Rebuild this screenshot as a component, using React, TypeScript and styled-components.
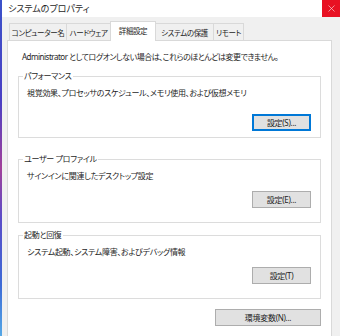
import styled, { createGlobalStyle } from 'styled-components'
import { X } from 'lucide-react'

const GlobalStyle = createGlobalStyle`
  html, body {
    margin: 0;
    padding: 0;
  }
  body {
    width: 340px;
    height: 336px;
    overflow: hidden;
    background: #f0f0f0;
    font-family: "Noto Sans", "Noto Sans CJK JP", sans-serif;
    font-size: 8px;
    letter-spacing: -0.3px;
    font-feature-settings: "palt";
    color: #1e1e1e;
  }
`

const tabs = [
  { label: 'コンピューター名', width: 58 },
  { label: 'ハードウェア', width: 45 },
  { label: '詳細設定', width: 46, active: true },
  { label: 'システムの保護', width: 59 },
  { label: 'リモート', width: 31 },
]

const groups = [
  { title: 'パフォーマンス', text: '視覚効果、プロセッサのスケジュール、メモリ使用、および仮想メモリ', button: '設定(S)...', primary: true, top: 0, gap: 15, bottom: 6 },
  { title: 'ユーザー プロファイル', text: 'サインインに関連したデスクトップ設定', button: '設定(E)...', primary: false, top: 15, gap: 9, bottom: 14 },
  { title: '起動と回復', text: 'システム起動、システム障害、およびデバッグ情報', button: '設定(T)', primary: false, top: 6, gap: 9, bottom: 14 },
]

const App = () => {
  return (
    <>
      <GlobalStyle />
      <Screen>
        <DesktopEdge />
        <Window>
          <TitleBar>
            <Title>システムのプロパティ</Title>
            <CloseButton><X size={11} strokeWidth={1.5} /></CloseButton>
          </TitleBar>
          <Body>
            <TabRow>
              {tabs.map((t) => (
                <Tab key={t.label} $active={t.active} $width={t.width}>{t.label}</Tab>
              ))}
            </TabRow>
            <Panel>
              <Notice>Administrator としてログオンしない場合は、これらのほとんどは変更できません。</Notice>
              {groups.map((g) => (
                <Group key={g.title} $top={g.top} $bottom={g.bottom}>
                  <Legend>{g.title}</Legend>
                  <Description>{g.text}</Description>
                  <ButtonRow $gap={g.gap}>
                    <Button $primary={g.primary}>{g.button}</Button>
                  </ButtonRow>
                </Group>
              ))}
              <FooterRow>
                <Button $wide>環境変数(N)...</Button>
              </FooterRow>
            </Panel>
          </Body>
        </Window>
      </Screen>
    </>
  )
}

const Screen = styled.div`
  display: flex;
  width: 340px;
  height: 336px;
`

const DesktopEdge = styled.div`
  width: 2px;
  background: linear-gradient(to bottom, #3b52c9 0%, #4a3fc4 30%, #a2419a 50%, #5a4cc8 65%, #3d6bd6 85%, #55a8e6 100%);
`

const Window = styled.div`
  flex: 1;
  display: flex;
  flex-direction: column;
  background: #f0f0f0;
`

const TitleBar = styled.div`
  height: 17px;
  display: flex;
  align-items: center;
  justify-content: space-between;
  background: #fff;
`

const Title = styled.div`
  padding-left: 6px;
  font-size: 9px;
  letter-spacing: 0;
`

const CloseButton = styled.div`
  width: 18px;
  height: 17px;
  display: flex;
  align-items: center;
  justify-content: center;
  background: #e81123;
  color: #f4d0d3;
`

const Body = styled.div`
  flex: 1;
  display: flex;
  flex-direction: column;
  padding: 6px 8px 0 5px;
`

const TabRow = styled.div`
  display: flex;
  align-items: flex-end;
  padding-left: 2px;
  height: 17px;
`

const Tab = styled.div<{ $active?: boolean; $width: number }>`
  position: relative;
  box-sizing: border-box;
  width: ${(p) => p.$width}px;
  height: ${(p) => (p.$active ? '20px' : '17px')};
  display: flex;
  align-items: center;
  justify-content: center;
  margin-right: -1px;
  margin-bottom: ${(p) => (p.$active ? '-1px' : '0')};
  padding-bottom: ${(p) => (p.$active ? '2px' : '0')};
  border: 1px solid #d9d9d9;
  border-bottom: none;
  background: ${(p) => (p.$active ? '#fff' : '#f0f0f0')};
  z-index: ${(p) => (p.$active ? 1 : 0)};
  font-size: 7.5px;
  letter-spacing: -0.4px;
  white-space: nowrap;
`

const Panel = styled.div`
  flex: 1;
  display: flex;
  flex-direction: column;
  background: #fff;
  border: 1px solid #d9d9d9;
  border-bottom: none;
  padding: 10px 10px 0 10px;
`

const Notice = styled.div`
  height: 12px;
  line-height: 12px;
  padding-left: 4px;
  margin-bottom: 7px;
  letter-spacing: -0.5px;
  white-space: nowrap;
`

const Group = styled.fieldset<{ $top: number; $bottom: number }>`
  margin: ${(p) => p.$top}px 0 0 0;
  padding: 0 9px ${(p) => p.$bottom}px 8px;
  border: 1px solid #dcdcdc;
  min-width: 0;
`

const Legend = styled.legend`
  padding: 0 1px;
  margin-left: -4px;
  line-height: 12px;
`

const Description = styled.div`
  margin-top: 5px;
  line-height: 12px;
`

const ButtonRow = styled.div<{ $gap: number }>`
  display: flex;
  justify-content: flex-end;
  margin-top: ${(p) => p.$gap}px;
`

const Button = styled.div<{ $primary?: boolean; $wide?: boolean }>`
  box-sizing: border-box;
  width: ${(p) => (p.$wide ? '106px' : '59px')};
  height: 17px;
  display: flex;
  align-items: center;
  justify-content: center;
  background: #e1e1e1;
  border: 1px solid ${(p) => (p.$primary ? '#0078d7' : '#adadad')};
  box-shadow: ${(p) => (p.$primary ? 'inset 0 0 0 1px #0078d7' : 'none')};
`

const FooterRow = styled.div`
  display: flex;
  justify-content: flex-end;
  margin-top: 10px;
`

export default App
